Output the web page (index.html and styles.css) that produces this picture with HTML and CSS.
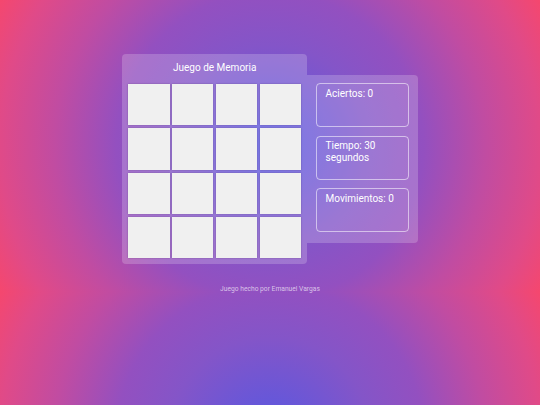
FILE: index.html
```html
<!DOCTYPE html>
<html lang="es">
<head>
<meta charset="utf-8">
<title>Juego de Memoria</title>
<link rel="stylesheet" href="styles.css">
</head>
<body>
<main class="app">
  <section class="board">
    <h1 class="title">Juego de Memoria</h1>
    <div class="grid">
      <div class="card"></div><div class="card"></div><div class="card"></div><div class="card"></div>
      <div class="card"></div><div class="card"></div><div class="card"></div><div class="card"></div>
      <div class="card"></div><div class="card"></div><div class="card"></div><div class="card"></div>
      <div class="card"></div><div class="card"></div><div class="card"></div><div class="card"></div>
    </div>
  </section>
  <aside class="stats">
    <div class="stat">Aciertos: 0</div>
    <div class="stat">Tiempo: 30 segundos</div>
    <div class="stat">Movimientos: 0</div>
  </aside>
</main>
<footer class="credit">Juego hecho por Emanuel Vargas</footer>
</body>
</html>
```
FILE: styles.css
```css
html {
  min-height: 100%;
  background-color: #f5476e;
  background-image: radial-gradient(circle at center,
    #5658e2 0%,
    #8455c8 33%,
    #9350c0 50%,
    #c04ca2 70%,
    #e04a88 88%,
    #f5476e 100%);
  background-size: 100% 292px;
  background-repeat: repeat;
}

body {
  margin: 0;
  font-family: Roboto, "Liberation Sans", sans-serif;
  font-weight: 400;
  color: #ffffff;
}

.app {
  display: flex;
  justify-content: center;
  align-items: center;
  padding-top: 54px;
}

.board {
  background: rgba(255, 255, 255, 0.2);
  border-radius: 4px;
  padding: 0 5.5px 6px 6px;
}

.title {
  margin: 0;
  padding: 6.5px 0 10.5px;
  font-size: 10px;
  line-height: 13px;
  font-weight: 400;
  text-align: center;
  color: #ffffff;
}

.grid {
  display: grid;
  grid-template-columns: repeat(4, 41.3px);
  grid-auto-rows: 41.3px;
  column-gap: 2.5px;
  row-gap: 3px;
}

.card {
  background: #f0f0f0;
  box-shadow: 0 0 1.5px rgba(60, 40, 90, 0.45);
}

.stats {
  display: flex;
  flex-direction: column;
  gap: 8.5px;
  background: rgba(255, 255, 255, 0.2);
  border-radius: 0 4px 4px 0;
  padding: 8.3px 8.4px 11px 9px;
}

.stat {
  box-sizing: border-box;
  width: 93.7px;
  height: 44px;
  border: 1px solid rgba(255, 255, 255, 0.55);
  border-radius: 4px;
  padding: 3.5px 9px 0;
  font-size: 10px;
  line-height: 12px;
  color: #ffffff;
}

.credit {
  margin-top: 21px;
  font-size: 6.7px;
  line-height: 8px;
  text-align: center;
  color: rgba(255, 255, 255, 0.65);
}
```
